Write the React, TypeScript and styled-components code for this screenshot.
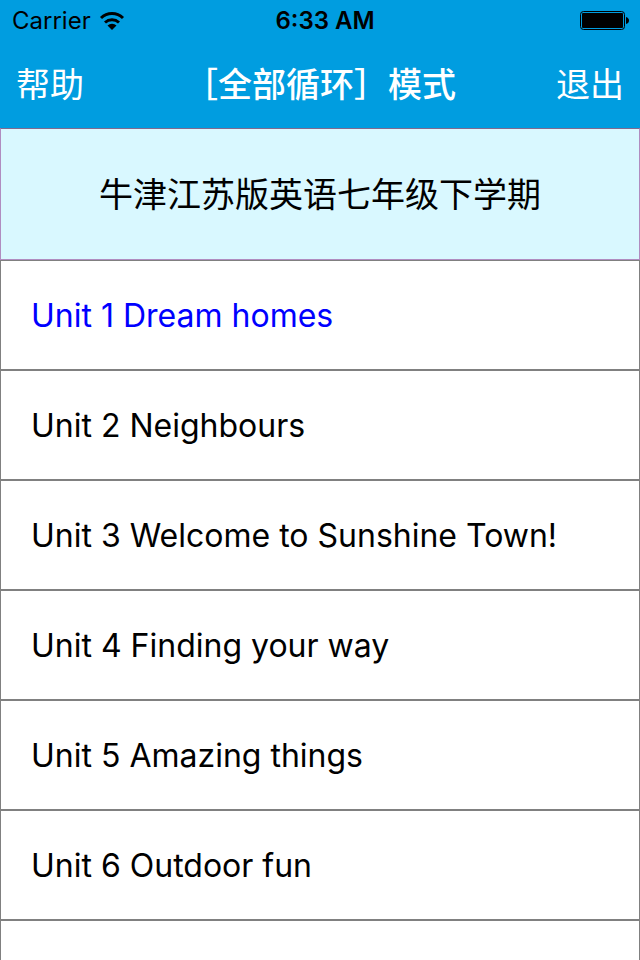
import React from "react";
import styled, { createGlobalStyle } from "styled-components";

const Global = createGlobalStyle`
  * { box-sizing: border-box; }
  html, body { margin: 0; background: #fff; }
  body { font-family: Inter, "Noto Sans CJK SC", sans-serif; color: #000; }
`;

const Screen = styled.div`
  height: 100vh;
  display: flex;
  flex-direction: column;
  overflow: hidden;
`;

const Header = styled.header`
  flex: none;
  background: #009de0;
`;

const StatusBar = styled.div`
  display: grid;
  grid-template-columns: 1fr auto 1fr;
  align-items: center;
  height: 42px;
  padding: 0 10px 0 12px;
  font-size: 24px;
  line-height: 42px;
`;

const Carrier = styled.div`
  display: flex;
  align-items: center;
  gap: 8px;
`;

const Clock = styled.time`
  padding-left: 8px;
  font-weight: 600;
`;

const BatterySlot = styled.div`
  display: flex;
  justify-content: flex-end;
`;

const NavBar = styled.nav`
  display: grid;
  grid-template-columns: 1fr auto 1fr;
  align-items: center;
  height: 86px;
  padding: 0 16px;
`;

const NavButton = styled.button<{ $end?: boolean }>`
  justify-self: ${(p) => (p.$end ? "end" : "start")};
  padding: 0;
  border: 0;
  background: none;
  color: #fff;
  font: inherit;
  font-size: 34px;
  line-height: 48px;
`;

const Title = styled.h1`
  margin: 0;
  color: #fff;
  font-size: 34px;
  font-weight: 500;
  line-height: 48px;
`;

const BookTitle = styled.h2`
  flex: none;
  margin: 0;
  height: 132px;
  padding-top: 2px;
  display: flex;
  align-items: center;
  justify-content: center;
  border: 1px solid #b08cc0;
  border-top-color: #806a90;
  background: #d9f8ff;
  font-size: 34px;
  font-weight: 400;
  line-height: 48px;
`;

const UnitList = styled.ul`
  flex: none;
  margin: 0;
  padding: 0;
  list-style: none;
`;

const UnitButton = styled.button<{ $active?: boolean }>`
  display: block;
  width: 100%;
  height: 110px;
  padding: 2px 30px 0;
  border: 1px solid #808080;
  background: #fff;
  color: ${(p) => (p.$active ? "#0000ff" : "#000")};
  font: inherit;
  font-size: 32px;
  line-height: 48px;
  text-align: left;
`;

const units = [
  "Unit 1 Dream homes",
  "Unit 2 Neighbours",
  "Unit 3 Welcome to Sunshine Town!",
  "Unit 4 Finding your way",
  "Unit 5 Amazing things",
  "Unit 6 Outdoor fun",
  "",
];

const WifiIcon = () => (
  <svg width="26" height="18" viewBox="0 0 26 18" aria-label="Wi-Fi">
    <g fill="none" stroke="#000" strokeWidth="3">
      <path d="M2 6a16 16 0 0 1 22 0" />
      <path d="M6 10.500a10.500 10.500 0 0 1 14 0" />
    </g>
    <path d="M13 18l-4.500-4.500a6.500 6.500 0 0 1 9 0z" />
  </svg>
);

const BatteryIcon = () => (
  <svg width="50" height="20" viewBox="0 0 50 20" aria-label="Battery full">
    <rect x="0.500" y="0.500" width="44" height="18" rx="3" fill="none" stroke="#000" />
    <rect x="2" y="2" width="41" height="15" rx="1" />
    <path d="M46 6q3 1 3 3.500t-3 3.500z" />
  </svg>
);

export default function App() {
  return (
    <Screen>
      <Global />
      <Header>
        <StatusBar>
          <Carrier>
            <span>Carrier</span>
            <WifiIcon />
          </Carrier>
          <Clock>6:33 AM</Clock>
          <BatterySlot>
            <BatteryIcon />
          </BatterySlot>
        </StatusBar>
        <NavBar>
          <NavButton type="button">帮助</NavButton>
          <Title>［全部循环］模式</Title>
          <NavButton type="button" $end>退出</NavButton>
        </NavBar>
      </Header>
      <BookTitle>牛津江苏版英语七年级下学期</BookTitle>
      <UnitList>
        {units.map((name, i) => (
          <li key={i}>
            <UnitButton type="button" $active={i === 0}>{name}</UnitButton>
          </li>
        ))}
      </UnitList>
    </Screen>
  );
}
